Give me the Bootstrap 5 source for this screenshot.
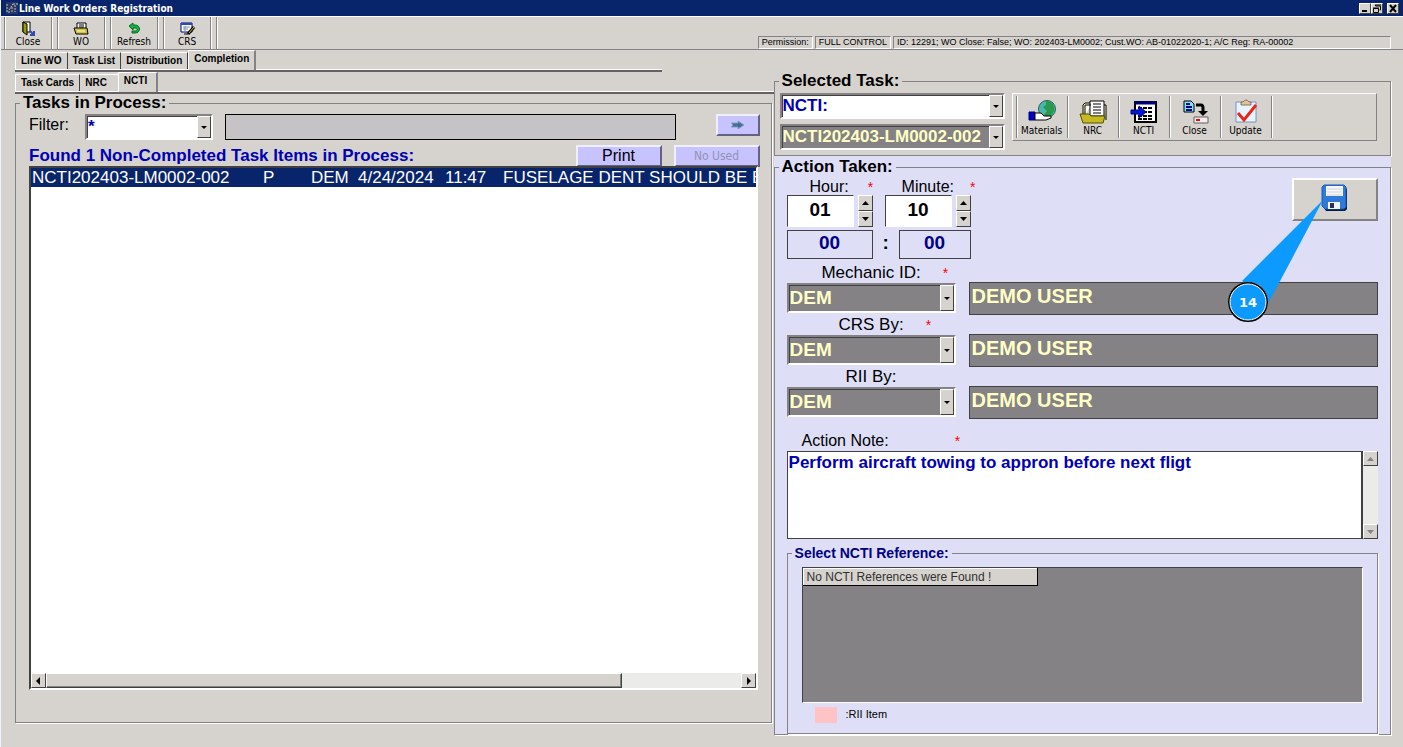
<!DOCTYPE html>
<html lang="en">
<head>
<meta charset="utf-8">
<meta name="viewport" content="width=device-width, initial-scale=1">
<title>Line Work Orders Registration</title>
<link href="https://cdn.jsdelivr.net/npm/bootstrap@5.3.0/dist/css/bootstrap.min.css" rel="stylesheet">
<style>
:root{--face:#d6d3ce;--shade:#848284;--dark:#424142;--navy:#08246b;--lilac:#dedff7;--btn:#c6c3ff;--ink:#0000b5;--cream:#ffffc6}
body{background:var(--face);color:#000;font:16px/18px "Liberation Sans",Arial,sans-serif;min-height:100vh;border-left:1px solid #eff3ff}
button,input,select,textarea{font:inherit;border-radius:0}
.ui-small{font:10px/12px "DejaVu Sans Condensed","DejaVu Sans",sans-serif}
.title-bar{background:var(--navy);color:#fff;height:17px;border-bottom:1px solid #fff;font:bold 10px/15px "DejaVu Sans Condensed","DejaVu Sans",sans-serif}
.win-btn{width:12px;height:11px;padding:0;background:var(--face);border:1px solid;border-color:#fff var(--dark) var(--dark) #fff;display:flex}
.top-tools{height:33px;border-bottom:1px solid var(--shade);padding-left:3px}
.tool-row{gap:5px}
.tool{width:48px;padding:1px 0 0;background:none;border:0;border-left:1px solid var(--shade);border-right:1px solid var(--shade);box-shadow:1px 0 #fff,inset 1px 0 #fff}
.tool-end,.task-end{border-left:1px solid var(--shade);box-shadow:inset 1px 0 #fff;width:2px}
.tool svg,.task-tool svg{display:block;margin:0 auto}
.status{gap:2px;padding-right:12px}
.panel-text{font-size:9px;line-height:11px;border:1px solid;border-color:var(--shade) #fff #fff var(--shade);padding:0 3px;white-space:nowrap}
.panel-wide{flex:0 0 498px}
.work{display:grid;grid-template-columns:772fr 617fr;padding-right:12px}
.tab-strip{font-weight:bold;font-size:10px;line-height:14px;border-bottom:2px solid #636163;box-shadow:inset 0 -1px #fff;margin-left:14px;height:22px}
.tab-strip button{padding:1px 5px;border:0;background:var(--face);border-top:1px solid #fff;border-right:1px solid var(--dark);height:17px;font-weight:bold;margin-bottom:1px}
.tab-strip button:first-child{border-left:1px solid #fff}
.tab-strip .before-current{padding-right:11px;border-right:0}
.tab-strip button.current{height:20px;margin:0;padding-bottom:5px;border-left:1px solid #fff;border-right:2px solid var(--shade)}
.tab-strip .wide-tab{padding-right:9px}
.tab-outer{margin-right:112px}
.group{border:1px solid var(--shade);box-shadow:1px 1px #fff;min-width:0;margin:0}
.group>legend{float:none;width:auto;font-weight:bold;font-size:17px;line-height:18px;margin:0 0 0 4px;padding:0 3px}
.combo{position:relative;height:26px;border:2px solid;border-color:var(--shade) #fff #fff var(--shade)}
.combo select{appearance:none;width:100%;height:100%;border:0;box-shadow:inset 1px 1px var(--dark);padding:0 14px 0 1px;background:#fff;color:var(--ink);font-weight:bold;font-size:17px;line-height:20px;display:block}
.combo.gray select{background:var(--shade);color:var(--cream)}
.combo svg{position:absolute;right:0;top:0;height:100%;width:14px;background:var(--face);border:1px solid;border-color:#fff var(--dark) var(--dark) #fff;pointer-events:none}
.raised{background:var(--btn);border:2px solid;border-color:#efefff #636184 #636184 #efefff;padding:0;line-height:18px}
.raised:disabled{color:#9492b5;font:12px/18px "DejaVu Sans Condensed",sans-serif}
.tasks{margin:0 2px 0 14px}
.left-body{padding:2px 11px 32px 13px}
.filter-label{width:56px;padding-top:2px}
.filter-combo{width:128px;margin-right:12px}
.filter-out{height:26px;background:#c6c3c6;border:1px solid #000;min-width:0}
.go{width:44px;height:22px;margin-left:40px}
.found-row{padding-top:5px;height:26px}
.found{font-weight:bold;font-size:17px;line-height:22px;color:var(--ink);white-space:nowrap}
.wide{width:86px;height:22px;margin-left:12px}
.task-list{background:#fff;border:2px solid;border-color:var(--dark) #fff #fff var(--dark);margin-right:2px}
.task-rows{table-layout:fixed;width:100%;font-size:17px;line-height:19px}
.task-rows td{padding:0;white-space:nowrap;overflow:hidden}
.task-rows td:first-child{padding-left:1px}
.c-id{width:232px}.c-p{width:48px}.c-who{width:47px}.c-date{width:87px}.c-time{width:58px}
.picked{background:var(--navy);color:#fff}
.scroll-key{width:15px;height:15px;padding:0;background:var(--face);border:1px solid;border-color:#fff var(--dark) var(--dark) #fff;display:flex;align-items:center;justify-content:center;flex:none}
.track{background:#ebebe9}
.thumb{width:83%;background:var(--face);border:1px solid;border-color:#fff var(--dark) var(--dark) #fff;box-shadow:inset -1px -1px var(--shade)}
.right-col{padding:22px 0 12px}
.sel-body{padding:3px 13px 5px 5px;gap:7px}
.sel-combos{width:225px;display:grid;gap:5px}
.task-tools{border:1px solid;border-color:#fff var(--shade) var(--shade) #fff;height:48px;padding:2px 3px}
.task-tool{width:51px;background:none;border:0;border-left:1px solid var(--shade);box-shadow:inset 1px 0 #fff;padding:0}
.action{background:var(--lilac);padding-top:2px}
.act-body{padding:0 12px;height:100%}
.time-grid{display:grid;grid-template-columns:98px 86px;line-height:21px}
.hour-label{padding-left:23px;height:19px}
.min-label{padding-left:17px;height:19px;white-space:nowrap}
.req{color:#f00;font-size:14px;margin-left:19px}
.min-label .req{margin-left:16px}
.time-pair{gap:4px}
.time-in{width:67px;height:32px;border:1px solid;border-color:var(--dark) #fff #fff var(--dark);font-weight:bold;font-size:19px;text-align:center;padding:0 0 3px}
.spin{height:16px}
.total{grid-column:1/3;margin-top:3px}
.time-out{width:86px;height:29px;border:1px solid var(--dark);color:#000084;font-weight:bold;font-size:19px;line-height:24px;text-align:center}
.time-out.second{width:72px}
.colon{width:26px;text-align:center;font-size:19px;line-height:26px}
.save{width:86px;height:43px;margin-top:2px;background:var(--face);border:2px solid;border-color:#fff var(--shade) var(--shade) #fff;padding:0 0 4px}
.people{padding-top:4px}
.line-label{height:19px;line-height:19px;font-size:17px;width:169px;text-align:center}
.line-label .req{display:inline-block;width:0;margin:0;text-indent:22px}
.person{display:grid;grid-template-columns:169px 1fr;column-gap:13px;height:33px}
.person .combo{height:30px;margin-top:1px}
.person .combo select{font-size:19px}
.person-name{height:33px;background:var(--shade);border:1px solid var(--dark);color:var(--cream);font-size:20px;font-weight:bold;padding:0 2px 5px;width:100%}
.note-label{padding:12px 0 0 15px;line-height:20px}
.note-label .req{margin-left:66px}
.note{height:88px;resize:none;border:1px solid var(--dark);border-right-width:2px;color:var(--ink);font-weight:bold;font-size:17px;line-height:19px;padding:1px;overflow:hidden}
.ref-group{margin-top:5px}
.ref-group>legend{font-size:14px;color:#000084}
.ref-body{padding:5px 14px 0}
.ref-box{background:var(--shade);height:136px;border:1px solid;border-color:var(--dark) #fff #fff var(--dark)}
.ref-box table{width:235px;font-size:12px;line-height:16px;color:#313031}
.ref-box th{font-weight:normal;background:var(--face);border:1px solid;border-color:#fff #000 #000 #fff;padding:0 3px;white-space:nowrap}
.legend-row{padding:4px 13px 0;gap:9px;font-size:11px;line-height:14px}
.swatch{width:22px;height:16px;background:#ffc3c6}
.callout{position:absolute;right:56px;top:42px;pointer-events:none;font:bold 13px "DejaVu Sans",sans-serif}
</style>
</head>
<body class="d-flex flex-column">
<header>
 <div class="title-bar d-flex align-items-center">
  <svg width="14" height="14" viewBox="0 0 14 14" class="ms-1 flex-shrink-0"><path d="M1 1h12v12H1z" fill="#26366b"/><path d="M2 3v8h4M4 9l4-6M8 3h5M10 4v7M7 6v6" stroke="#c8c39c" stroke-dasharray="2 1" fill="none"/></svg>
  <span>Line Work Orders Registration</span>
  <div class="d-flex ms-auto me-1 align-items-center">
   <button class="win-btn" aria-label="Minimize"><svg width="10" height="9"><path d="M2 7h5" stroke="#000" stroke-width="2"/></svg></button>
   <button class="win-btn" aria-label="Restore"><svg width="10" height="9"><path d="M3.500 1v1h5v4h-1M1.500 4.500h5v4h-5zM1 4h6M3 1h6" fill="none" stroke="#000"/></svg></button>
   <button class="win-btn ms-1" aria-label="Close window"><svg width="10" height="9"><path d="M2 1l6 7M8 1l-6 7" stroke="#000" stroke-width="2"/></svg></button>
  </div>
 </div>
 <div class="top-tools d-flex">
  <div class="tool-row d-flex ui-small">
   <button class="tool"><svg width="18" height="16" viewBox="0 0 18 16"><path d="M4 2h7v10H4z" fill="#fff" stroke="#000"/><path d="M4 2l4 2v11l-4-3z" fill="#9c9a00" stroke="#000"/><path d="M11 11l3 3M11 15h4v-4" stroke="#314aad" stroke-width="2" fill="none"/></svg>Close</button>
   <button class="tool"><svg width="18" height="16" viewBox="0 0 18 16"><path d="M5 9V3h9v6" fill="#fff" stroke="#000"/><path d="M7 5h5M7 7h5" stroke="#000"/><path d="M2 8h13l1 6H4z" fill="#cec34a" stroke="#000"/><path d="M5 11h8" stroke="#ffffa5"/></svg>WO</button>
   <button class="tool"><svg width="18" height="16" viewBox="0 0 18 16"><path d="M4 6l4-3v2h2c6 0 6 8 0 8H7v-2h3c3 0 3-3 0-3H8v2z" fill="#10b642" stroke="#086b21"/></svg>Refresh</button>
   <button class="tool"><svg width="18" height="16" viewBox="0 0 18 16"><path d="M3 3h11v9H3z" fill="#fff" stroke="#000073"/><path d="M3 4h11" stroke="#2949b5" stroke-width="2"/><path d="M5 7h7M5 9h5M7 6v5" stroke="#7b92b5"/><path d="M10 14l6-7" stroke="#000" stroke-width="3"/><path d="M11 13l5-6" stroke="#dec300"/><path d="M6 14h4" stroke="#000"/></svg>CRS</button>
   <span class="tool-end"></span>
  </div>
  <div class="status d-flex align-items-end flex-grow-1 justify-content-end">
   <span class="panel-text">Permission:</span><span class="panel-text">FULL CONTROL</span><span class="panel-text panel-wide">ID: 12291; WO Close: False; WO: 202403-LM0002; Cust.WO: AB-01022020-1; A/C Reg: RA-00002</span>
  </div>
 </div>
</header>
<main class="work flex-grow-1">
 <section class="d-flex flex-column pb-4">
  <nav class="tab-strip tab-outer d-flex align-items-end"><button>Line WO</button><button>Task List</button><button>Distribution</button><button class="current">Completion</button></nav>
  <nav class="tab-strip d-flex align-items-end"><button>Task Cards</button><button class="before-current">NRC</button><button class="current wide-tab">NCTI</button></nav>
  <fieldset class="group tasks flex-grow-1 d-flex flex-column">
   <legend>Tasks in Process:</legend>
   <div class="d-flex flex-column flex-grow-1 left-body">
    <div class="d-flex align-items-start">
     <label for="filter" class="filter-label">Filter:</label>
     <div class="combo filter-combo"><select id="filter"><option>*</option></select><svg viewBox="0 0 12 20"><path d="M3 9h6l-3 3z"/></svg></div>
     <input class="filter-out flex-grow-1" aria-label="Filter text" readonly>
     <button class="raised go" aria-label="Apply filter"><svg width="16" height="12" viewBox="0 0 16 12" class="d-block mx-auto"><path d="M1 4h7V2l6 4-6 4V8H1l2-2z" fill="#426d94" stroke="#84a2bd"/></svg></button>
    </div>
    <div class="d-flex justify-content-between found-row">
     <span class="found">Found 1 Non-Completed Task Items in Process:</span>
     <span class="d-flex"><button class="raised wide">Print</button><button class="raised wide" disabled>No Used</button></span>
    </div>
    <div class="task-list flex-grow-1 d-flex flex-column">
     <table class="task-rows"><colgroup><col class="c-id"><col class="c-p"><col class="c-who"><col class="c-date"><col class="c-time"><col></colgroup>
      <tbody><tr class="picked"><td>NCTI202403-LM0002-002</td><td>P</td><td>DEM</td><td>4/24/2024</td><td>11:47</td><td>FUSELAGE DENT SHOULD BE E</td></tr></tbody></table>
     <div class="track d-flex mt-auto">
      <button class="scroll-key" aria-label="Scroll left"><svg width="5" height="8"><path d="M4 0v8L0 4z"/></svg></button>
      <div class="flex-grow-1 d-flex"><div class="thumb"></div></div>
      <button class="scroll-key" aria-label="Scroll right"><svg width="5" height="8"><path d="M1 0v8l4-4z"/></svg></button>
     </div>
    </div>
   </div>
  </fieldset>
 </section>
 <section class="right-col d-flex flex-column">
  <fieldset class="group">
   <legend>Selected Task:</legend>
   <div class="d-flex sel-body">
    <div class="sel-combos">
     <div class="combo"><select aria-label="Task type"><option>NCTI:</option></select><svg viewBox="0 0 12 20"><path d="M3 9h6l-3 3z"/></svg></div>
     <div class="combo gray"><select aria-label="Task number"><option>NCTI202403-LM0002-002</option></select><svg viewBox="0 0 12 20"><path d="M3 9h6l-3 3z"/></svg></div>
    </div>
    <div class="task-tools d-flex flex-grow-1 ui-small">
     <button class="task-tool"><svg width="30" height="28" viewBox="0 0 30 28"><circle cx="20" cy="12" r="8.500" fill="#4ab6ad" stroke="#315d63"/><path d="M19 4c5-1 9 4 8 10-3 6-7 8-10 4l3-4-4-4 3-2z" fill="#299a4a"/><path d="M2 15h6v8H2z" fill="#0000c6" stroke="#00007b"/><path d="M8 16h6l3 3h7v2l-5 2H8z" fill="#fff" stroke="#000"/></svg>Materials</button>
     <button class="task-tool"><svg width="30" height="28" viewBox="0 0 30 28"><path d="M5 17V8l2-2h5M26 8h2v15" fill="#ffffb5" stroke="#000"/><path d="M7 18V8h6M12 4h14v15H12z" fill="#fff" stroke="#000"/><path d="M15 7h8M15 10h8M15 13h8M15 16h8" stroke="#000"/><path d="M2 17h9l2 2h14l-2 7H5z" fill="#c6b921" stroke="#525100"/></svg>NRC</button>
     <button class="task-tool"><svg width="30" height="28" viewBox="0 0 30 28"><path d="M6 5h21v20H6z" fill="#fff" stroke="#000" stroke-width="2"/><path d="M6 6h21" stroke="#00007b" stroke-width="3"/><path d="M9 11h15M9 15h15M9 19h15M9 22h15" stroke="#000" stroke-width="2" stroke-dasharray="4 1"/><path d="M2 13h8V9l7 6-7 6v-4H2z" fill="#0018d6" stroke="#00007b"/></svg>NCTI</button>
     <button class="task-tool"><svg width="30" height="28" viewBox="0 0 30 28"><path d="M4 4h7l3 3v8H4z" fill="#7be7ff" stroke="#000"/><path d="M6 7h4M6 10h6M6 13h6" stroke="#000084" stroke-width="2"/><path d="M16 8h5q2 0 2 3v4" fill="none" stroke="#000" stroke-width="3"/><path d="M18 14h10l-5 5z"/><path d="M14 20h14v6H14z" fill="#eee" stroke="#636163"/><path d="M16 23h4" stroke="#f00" stroke-width="2"/></svg>Close</button>
     <button class="task-tool"><svg width="30" height="28" viewBox="0 0 30 28"><path d="M5 5h20v20H5z" fill="#e7f3ff" stroke="#7392ce"/><path d="M10 7V5h2q3-4 6 0h2v3H10z" fill="#dec39c" stroke="#8c7552"/><path d="M7 16l6 7L25 8" fill="none" stroke="#e72818" stroke-width="3"/></svg>Update</button>
     <span class="task-end"></span>
    </div>
   </div>
  </fieldset>
  <div class="action flex-grow-1 d-flex flex-column position-relative">
   <fieldset class="group flex-grow-1 d-flex flex-column">
    <legend>Action Taken:</legend>
    <div class="act-body d-flex flex-column flex-grow-1">
     <div class="d-flex justify-content-between align-items-start">
      <div class="time-grid">
       <div class="hour-label"><label for="hh">Hour:</label><span class="req">*</span></div>
       <div class="min-label"><label for="mm">Minute:</label><span class="req">*</span></div>
       <div class="d-flex time-pair"><input id="hh" class="time-in" value="01"><div><button class="scroll-key spin" aria-label="Hour up"><svg width="7" height="4"><path d="M0 4h7L3.500 0z"/></svg></button><button class="scroll-key spin" aria-label="Hour down"><svg width="7" height="4"><path d="M0 0h7L3.500 4z"/></svg></button></div></div>
       <div class="d-flex time-pair"><input id="mm" class="time-in" value="10"><div><button class="scroll-key spin" aria-label="Minute up"><svg width="7" height="4"><path d="M0 4h7L3.500 0z"/></svg></button><button class="scroll-key spin" aria-label="Minute down"><svg width="7" height="4"><path d="M0 0h7L3.500 4z"/></svg></button></div></div>
       <div class="total d-flex"><output class="time-out">00</output><b class="colon">:</b><output class="time-out second">00</output></div>
      </div>
      <button class="save" aria-label="Save"><svg width="28" height="28" viewBox="0 0 28 28" class="d-block mx-auto"><path d="M4 3h20l2 2v20l-2 2H5l-2-3V5z" fill="#001c42"/><path d="M3 1h20l2 2v20l-2 2H4l-3-3V3z" fill="#3179d6" stroke="#1859b5"/><path d="M5 2h17v10H5z" fill="#f7f7f7"/><path d="M6 5h15M6 8h15M6 11h15" stroke="#ced3de"/><path d="M7 18h12v7H7z" fill="#eff3ff"/><path d="M9 19h4v5H9z" fill="#31304a"/></svg></button>
     </div>
     <div class="people">
      <div class="line-label"><label for="mech">Mechanic ID:</label><span class="req">*</span></div>
      <div class="person"><div class="combo gray"><select id="mech"><option>DEM</option></select><svg viewBox="0 0 12 20"><path d="M3 9h6l-3 3z"/></svg></div><input class="person-name" aria-label="Mechanic name" value="DEMO USER" readonly></div>
      <div class="line-label"><label for="crs">CRS By:</label><span class="req">*</span></div>
      <div class="person"><div class="combo gray"><select id="crs"><option>DEM</option></select><svg viewBox="0 0 12 20"><path d="M3 9h6l-3 3z"/></svg></div><input class="person-name" aria-label="CRS name" value="DEMO USER" readonly></div>
      <div class="line-label"><label for="rii">RII By:</label></div>
      <div class="person"><div class="combo gray"><select id="rii"><option>DEM</option></select><svg viewBox="0 0 12 20"><path d="M3 9h6l-3 3z"/></svg></div><input class="person-name" aria-label="RII name" value="DEMO USER" readonly></div>
     </div>
     <div class="note-label d-flex"><label for="note">Action Note:</label><span class="req">*</span></div>
     <div class="d-flex"><textarea id="note" class="note flex-grow-1" spellcheck="false">Perform aircraft towing to appron before next fligt</textarea>
      <div class="track d-flex flex-column justify-content-between"><button class="scroll-key" aria-label="Scroll up"><svg width="7" height="4"><path d="M0 4h7L3.500 0z" fill="#848284"/></svg></button><button class="scroll-key" aria-label="Scroll down"><svg width="7" height="4"><path d="M0 0h7L3.500 4z" fill="#848284"/></svg></button></div></div>
     <fieldset class="group ref-group flex-grow-1">
      <legend>Select NCTI Reference:</legend>
      <div class="ref-body">
       <div class="ref-box"><table><thead><tr><th>No NCTI References were Found !</th></tr></thead></table></div>
       <div class="d-flex legend-row"><span class="swatch"></span><span>:RII Item</span></div>
      </div>
     </fieldset>
    </div>
   </fieldset>
   <svg class="callout" width="110" height="130" viewBox="0 0 110 130"><path d="M98 2L17 83l27 21z" fill="#0c9aff"/><circle cx="23" cy="104" r="20" fill="#fff"/><circle cx="23" cy="104" r="19" fill="#0c9aff" stroke="#000" stroke-width="2"/><circle cx="23" cy="104" r="18" fill="none" stroke="#fff"/><text x="23" y="109" text-anchor="middle" fill="#fff">14</text></svg>
  </div>
 </section>
</main>
<script src="https://cdn.jsdelivr.net/npm/bootstrap@5.3.0/dist/js/bootstrap.bundle.min.js"></script>
</body>
</html>
